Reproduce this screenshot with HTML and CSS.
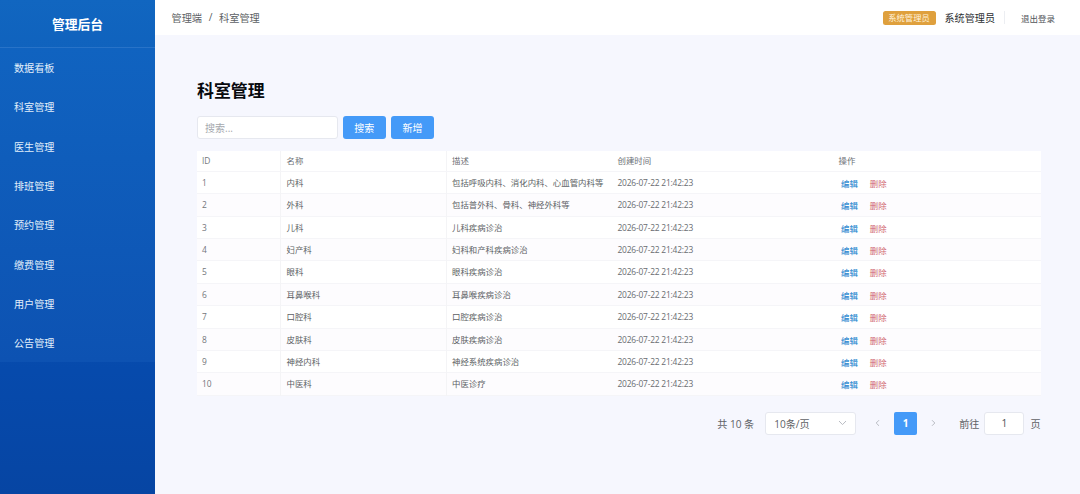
FILE: index.html
```html
<!DOCTYPE html>
<html lang="zh-CN">
<head>
<meta charset="utf-8">
<title>科室管理</title>
<link rel="stylesheet" href="styles.css">
</head>
<body>
<div class="app">
  <aside class="sidebar">
    <div class="brand">管理后台</div>
    <nav class="menu">
      <a class="menu-item">数据看板</a>
      <a class="menu-item">科室管理</a>
      <a class="menu-item">医生管理</a>
      <a class="menu-item">排班管理</a>
      <a class="menu-item">预约管理</a>
      <a class="menu-item">缴费管理</a>
      <a class="menu-item">用户管理</a>
      <a class="menu-item">公告管理</a>
    </nav>
  </aside>
  <div class="main">
    <header class="topbar">
      <div class="crumbs"><span>管理端</span><span class="sep">/</span><span>科室管理</span></div>
      <div class="account">
        <span class="role">系统管理员</span>
        <span class="user">系统管理员</span>
        <span class="divider"></span>
        <a class="logout">退出登录</a>
      </div>
    </header>
    <main class="content">
      <h1 class="title">科室管理</h1>
      <div class="toolbar">
        <input class="search" placeholder="搜索...">
        <button class="btn">搜索</button>
        <button class="btn">新增</button>
      </div>
      <div class="table">
        <div class="row head"><span>ID</span><span>名称</span><span>描述</span><span>创建时间</span><span>操作</span></div>
        <div class="row"><span>1</span><span>内科</span><span>包括呼吸内科、消化内科、心血管内科等</span><span class="date">2026-07-22 21:42:23</span><span class="ops"><a class="edit">编辑</a><a class="del">删除</a></span></div>
        <div class="row"><span>2</span><span>外科</span><span>包括普外科、骨科、神经外科等</span><span class="date">2026-07-22 21:42:23</span><span class="ops"><a class="edit">编辑</a><a class="del">删除</a></span></div>
        <div class="row"><span>3</span><span>儿科</span><span>儿科疾病诊治</span><span class="date">2026-07-22 21:42:23</span><span class="ops"><a class="edit">编辑</a><a class="del">删除</a></span></div>
        <div class="row"><span>4</span><span>妇产科</span><span>妇科和产科疾病诊治</span><span class="date">2026-07-22 21:42:23</span><span class="ops"><a class="edit">编辑</a><a class="del">删除</a></span></div>
        <div class="row"><span>5</span><span>眼科</span><span>眼科疾病诊治</span><span class="date">2026-07-22 21:42:23</span><span class="ops"><a class="edit">编辑</a><a class="del">删除</a></span></div>
        <div class="row"><span>6</span><span>耳鼻喉科</span><span>耳鼻喉疾病诊治</span><span class="date">2026-07-22 21:42:23</span><span class="ops"><a class="edit">编辑</a><a class="del">删除</a></span></div>
        <div class="row"><span>7</span><span>口腔科</span><span>口腔疾病诊治</span><span class="date">2026-07-22 21:42:23</span><span class="ops"><a class="edit">编辑</a><a class="del">删除</a></span></div>
        <div class="row"><span>8</span><span>皮肤科</span><span>皮肤疾病诊治</span><span class="date">2026-07-22 21:42:23</span><span class="ops"><a class="edit">编辑</a><a class="del">删除</a></span></div>
        <div class="row"><span>9</span><span>神经内科</span><span>神经系统疾病诊治</span><span class="date">2026-07-22 21:42:23</span><span class="ops"><a class="edit">编辑</a><a class="del">删除</a></span></div>
        <div class="row"><span>10</span><span>中医科</span><span>中医诊疗</span><span class="date">2026-07-22 21:42:23</span><span class="ops"><a class="edit">编辑</a><a class="del">删除</a></span></div>
      </div>
      <div class="pager">
        <span class="total">共 10 条</span>
        <div class="size"><span>10条/页</span><svg width="9" height="6" viewBox="0 0 9 6"><path d="M1 1l3.5 3.6L8 1"/></svg></div>
        <svg class="arrow prev" width="5" height="8" viewBox="0 0 5 8"><path d="M4 1.2L1.2 4 4 6.8"/></svg>
        <span class="page">1</span>
        <svg class="arrow next" width="5" height="8" viewBox="0 0 5 8"><path d="M1 1.2L3.8 4 1 6.8"/></svg>
        <span class="goto">前往</span>
        <input class="jump" value="1">
        <span>页</span>
      </div>
    </main>
  </div>
</div>
</body>
</html>
```

FILE: styles.css
```css
* { box-sizing: border-box; }
body {
  margin: 0;
  font-family: "Open Sans", "Noto Sans CJK SC", sans-serif;
  color: #606266;
}
input, button { font-family: inherit; margin: 0; outline: none; }
.app { display: flex; height: 494px; overflow: hidden; background: #f6f7fe; }

.sidebar {
  flex: none;
  width: 155px;
  background: linear-gradient(#1166c0, #064aac 75%, #0645a3);
}
.brand {
  height: 48px;
  border-bottom: 1px solid #2873c8;
  color: #fff;
  font-size: 12.8px;
  font-weight: 700;
  line-height: 48px;
  text-align: center;
}
.menu { height: 314.4px; background: linear-gradient(#1063c0, #0d52b2); }
.menu-item {
  display: block;
  height: 39.35px;
  padding-left: 14px;
  color: #e3f0fb;
  font-size: 10.1px;
  line-height: 40px;
}

.main { flex: 1; min-width: 0; }
.topbar {
  display: flex;
  align-items: center;
  justify-content: space-between;
  height: 35px;
  padding: 0 25px 0 16.5px;
  background: #fff;
}
.crumbs { display: flex; font-size: 10.2px; color: #5c5f64; }
.sep { width: 17px; text-align: center; }
.account { display: flex; align-items: center; }
.role {
  width: 53px;
  height: 14px;
  border-radius: 2.5px;
  background: #dfa03d;
  color: #fff3dc;
  font-size: 8.3px;
  line-height: 13.5px;
  text-align: center;
}
.user { margin-left: 9px; color: #2d2f33; font-size: 10.1px; }
.divider { width: 1px; height: 13px; margin: 0 16px 0 9px; background: #eceef2; }
.logout { color: #505358; font-size: 8.5px; }

.content { padding: 43px 40px 0 42px; }
.title {
  margin: 0;
  color: #080a0e;
  font-size: 16.9px;
  font-weight: 700;
  line-height: 26px;
}
.toolbar { display: flex; gap: 5.5px; margin-top: 12px; }
.search {
  width: 140.5px;
  height: 23px;
  padding: 0 7px;
  border: 1px solid #e6e8ef;
  border-radius: 3px;
  background: #fff;
  font-size: 10px;
}
.search::placeholder { color: #a5a8ae; }
.btn {
  width: 42.6px;
  height: 23px;
  padding: 0;
  border: 0;
  border-radius: 3px;
  background: #449af8;
  color: #fff;
  font-size: 10px;
  line-height: 22px;
}

.table { margin-top: 12px; width: 844px; background: #fff; font-size: 8.42px; }
.row {
  display: grid;
  grid-template-columns: 84px 165.5px 165.5px 221px 1fr;
  height: 22.37px;
  border-bottom: 1px solid #f5f5f8;
  line-height: 22px;
  color: #5c5f64;
}
.row > span { padding-left: 5.5px; white-space: nowrap; }
.row > span:nth-child(-n+2) { border-right: 1px solid #f4f4f6; }
.row > span:first-child { padding-left: 5px; color: #73767b; }
.row:nth-child(odd) { background: #fdfcfe; }
.head.row { height: 21px; line-height: 20px; background: #fff; color: #6c6f75; }
.row > .date { letter-spacing: -.2px; color: #696c71; }
.row > .ops { display: flex; gap: 12px; padding: 1px 0 0 8px; }
.edit { color: #378fd2; font-weight: 500; }
.del { color: #d0666f; }

.pager {
  display: flex;
  align-items: center;
  justify-content: flex-end;
  margin-top: 16.3px;
  width: 843.5px;
  height: 23px;
  font-size: 10.1px;
}
.size {
  display: flex;
  align-items: center;
  justify-content: space-between;
  width: 91px;
  height: 23px;
  margin-left: 11px;
  padding: 0 8px;
  border: 1px solid #e6e8ef;
  border-radius: 3px;
  background: #fff;
}
.pager svg { fill: none; stroke: #b9bcc3; stroke-width: 1; }
.prev { margin-left: 19px; }
.page {
  width: 23px;
  height: 23px;
  margin: 0 14px;
  border-radius: 2px;
  background: #449af8;
  color: #fff;
  font-weight: 700;
  line-height: 23px;
  text-align: center;
}
.goto { margin-left: 23px; }
.jump {
  width: 40px;
  height: 23px;
  margin: 0 6px 0 5px;
  padding: 0;
  border: 1px solid #e6e8ef;
  border-radius: 3px;
  background: #fff;
  color: #505358;
  font-size: 10.1px;
  text-align: center;
}
```
